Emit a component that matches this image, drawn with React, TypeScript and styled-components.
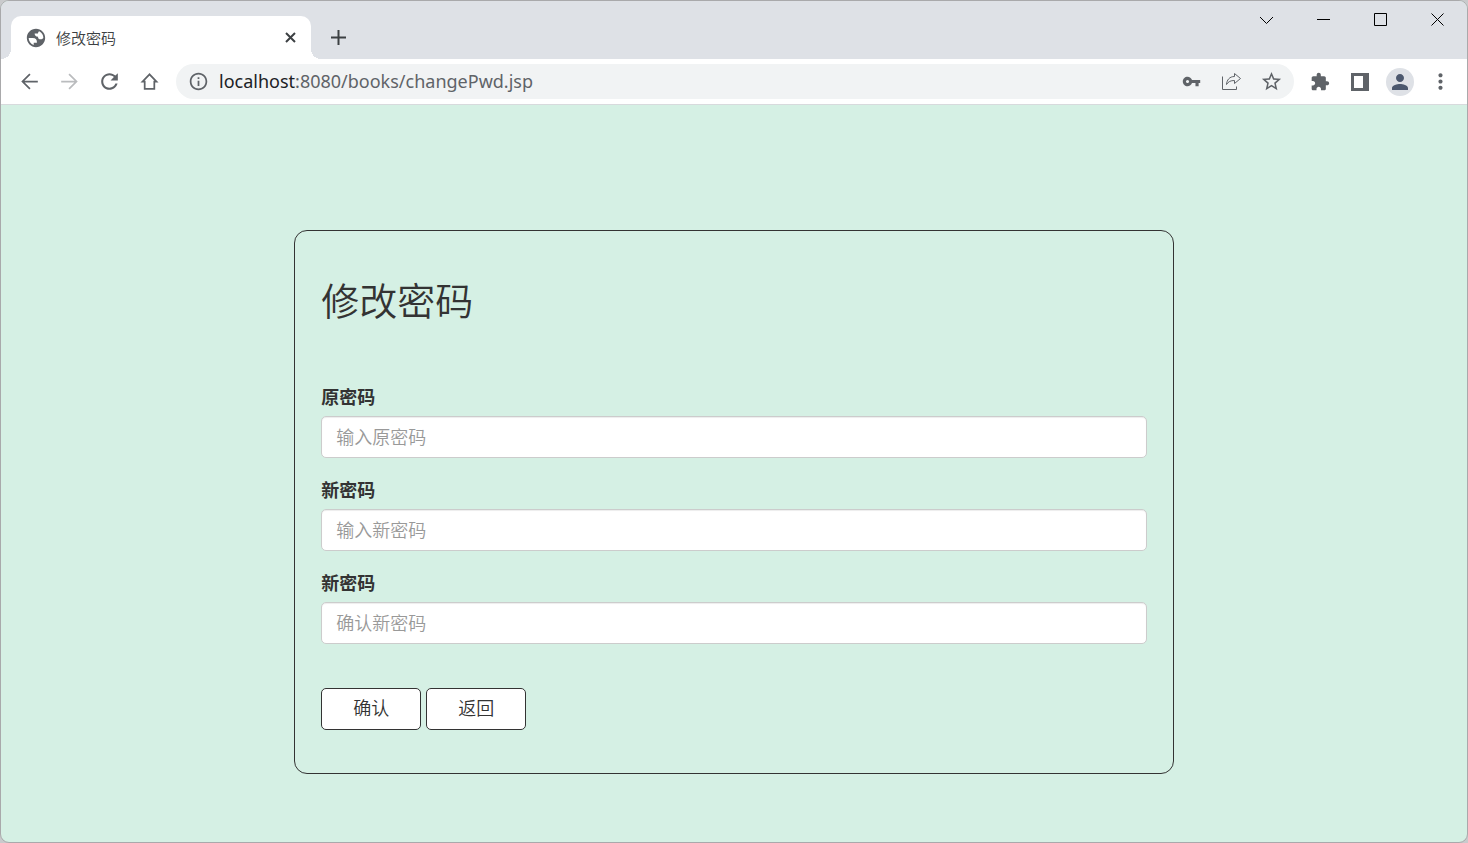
import React from "react";
import styled, { createGlobalStyle } from "styled-components";

const cjk = `"Noto Sans CJK SC", sans-serif`;

const GlobalStyle = createGlobalStyle`
  *, *::before, *::after { box-sizing: border-box; }
  body { margin: 0; background: #c9cacc; font-family: ${cjk}; }
  button, input { font-family: inherit; }
`;

const BrowserWindow = styled.div`
  display: flex;
  flex-direction: column;
  min-height: 100vh;
  border: 1px solid #a9a9ab;
  border-radius: 9px;
  overflow: hidden;
  background: #d5f0e4;
`;

const TitleBar = styled.header`
  display: flex;
  align-items: flex-start;
  height: 58px;
  padding-left: 10px;
  background: #dee1e6;
`;

const Tab = styled.div`
  position: relative;
  display: flex;
  align-items: center;
  width: 300px;
  height: 43px;
  margin-top: 15px;
  padding: 0 11px 0 14px;
  border-radius: 10px 10px 0 0;
  background: #fff;
  color: #5f6368;

  &::before, &::after {
    content: "";
    position: absolute;
    bottom: 0;
    width: 10px;
    height: 10px;
  }
  &::before {
    right: 100%;
    background: radial-gradient(circle at 0 0, transparent 10px, #fff 10px);
  }
  &::after {
    left: 100%;
    background: radial-gradient(circle at 100% 0, transparent 10px, #fff 10px);
  }
`;

const TabTitle = styled.span`
  flex: 1;
  margin-left: 9px;
  font-size: 15px;
  line-height: 20px;
  font-weight: 350;
  color: #3c4043;
`;

const IconButton = styled.button<{ $width?: number; $height?: number; $color?: string }>`
  display: flex;
  flex: none;
  align-items: center;
  justify-content: center;
  width: ${(p) => p.$width ?? 40}px;
  height: ${(p) => p.$height ?? 35}px;
  padding: 0;
  border: 0;
  background: none;
  color: ${(p) => p.$color ?? "#5f6368"};
`;

const NewTab = styled(IconButton)`
  margin: 19px 0 0 12px;
`;

const WindowControls = styled.div`
  display: flex;
  margin-left: auto;
  padding-right: 1px;
`;

const Toolbar = styled.nav`
  display: flex;
  align-items: center;
  height: 46px;
  padding: 0 7px 0 8px;
  border-bottom: 1px solid #d8dadd;
  background: #fff;
`;

const AddressBar = styled.div`
  display: flex;
  flex: 1;
  align-items: center;
  height: 35px;
  margin: 0 6px 0 7px;
  padding: 0 3px 0 12px;
  border-radius: 18px;
  background: #f1f3f4;
  color: #5f6368;
`;

const Url = styled.span`
  flex: 1;
  margin-left: 10px;
  padding-bottom: 2px;
  font-family: "Noto Sans", sans-serif;
  font-size: 18px;
  line-height: 24px;
`;

const Host = styled.span`
  color: #202124;
`;

const Avatar = styled.span`
  display: flex;
  align-items: center;
  justify-content: center;
  width: 28px;
  height: 28px;
  border-radius: 50%;
  background: #dee1e6;
  color: #4c586e;
`;

const Page = styled.main`
  flex: 1;
  padding: 125px 0 68px;
`;

const Card = styled.form`
  width: 60%;
  margin: 0 auto;
  padding: 48px 26px 43px;
  border: 1px solid #333;
  border-radius: 13px;
  color: #333;
`;

const Heading = styled.h1`
  margin: 0 0 65px;
  font-size: 38px;
  line-height: 40px;
  font-weight: 350;
`;

const Field = styled.div`
  margin-bottom: 19px;
`;

const Label = styled.label`
  display: block;
  margin-bottom: 7px;
  font-size: 18px;
  line-height: 25px;
  font-weight: 700;
`;

const Input = styled.input`
  display: block;
  width: 100%;
  height: 42px;
  padding: 0 14px 2px;
  border: 1px solid #ccc;
  border-radius: 5px;
  background: #fff;
  box-shadow: inset 0 1px 1px rgba(0, 0, 0, 0.075);
  font-size: 18px;
  font-weight: 350;
  color: #555;

  &::placeholder { color: #999; opacity: 1; }
`;

const Actions = styled.div`
  display: flex;
  gap: 5px;
  margin-top: 44px;
`;

const Button = styled.button`
  width: 100px;
  height: 42px;
  padding: 0 0 4px;
  border: 1px solid #333;
  border-radius: 5px;
  background: #fff;
  font-size: 18px;
  line-height: 25px;
  font-weight: 350;
  color: #333;
`;

type IconProps = { d: string; size?: number; stroke?: number; box?: number };

const Icon = ({ d, size = 21, stroke, box = 24 }: IconProps) => (
  <svg
    width={size}
    height={size}
    viewBox={`0 0 ${box} ${box}`}
    fill={stroke ? "none" : "currentColor"}
    stroke={stroke ? "currentColor" : "none"}
    strokeWidth={stroke}
    aria-hidden="true"
  >
    <path d={d} />
  </svg>
);

const paths = {
  globe:
    "M12 2C6.48 2 2 6.48 2 12s4.48 10 10 10 10-4.48 10-10S17.52 2 12 2zM4 12h4.4c3.4 0 4.9 1.7 4.6 5.1H9.5v2.5C6.3 18.5 4 15.5 4 12zm16 0c-.8 1-1.7 1.4-2.9 1.4-1.9 0-2.9-1-2.900-2.900-2.500 0-3.700-1.300-3.700-3.400h3.700c0-1.500.7-2.200 1.300-2.500C18.300 5.900 20 8.700 20 12z",
  back: "M21.5 12H4.5M12.5 3.5L4 12l8.500 8.500",
  forward: "M2.500 12h17M11.500 3.500L20 12l-8.500 8.500",
  reload:
    "M17.650 6.350C16.200 4.900 14.210 4 12 4c-4.420 0-7.990 3.580-7.990 8s3.570 8 7.990 8c3.730 0 6.840-2.550 7.730-6h-2.080c-.82 2.330-3.040 4-5.650 4-3.310 0-6-2.690-6-6s2.690-6 6-6c1.660 0 3.140.69 4.220 1.780L13 11h7V4l-2.350 2.350z",
  home: "M12 3.800L4 12.200h2.500V20.500h11V12.200H20z",
  info: "M11 7h2v2h-2zm0 4h2v6h-2zm1-9C6.480 2 2 6.480 2 12s4.480 10 10 10 10-4.480 10-10S17.520 2 12 2zm0 18c-4.410 0-8-3.590-8-8s3.590-8 8-8 8 3.590 8 8-3.590 8-8 8z",
  key: "M12.650 10C11.830 7.670 9.610 6 7 6c-3.310 0-6 2.690-6 6s2.690 6 6 6c2.610 0 4.830-1.670 5.650-4H17v4h4v-4h2v-4H12.650zM7 14c-1.100 0-2-.9-2-2s.9-2 2-2 2 .9 2 2-.9 2-2 2z",
  share: "M1.500 5.500v13h14v-3M13.500 2.500l6 5-6 5v-3c-4 0-6 1-8 4 .3-4.500 3-8 8-8z",
  star: "M22 9.240l-7.190-.62L12 2 9.190 8.630 2 9.240l5.460 4.730L5.820 21 12 17.270 18.180 21l-1.630-7.030L22 9.240zM12 15.400l-3.760 2.270 1-4.280-3.320-2.880 4.380-.38L12 6.100l1.710 4.040 4.380.38-3.320 2.880 1 4.280L12 15.400z",
  puzzle:
    "M20.500 11H19V7c0-1.100-.9-2-2-2h-4V3.500C13 2.120 11.880 1 10.500 1S8 2.120 8 3.500V5H4c-1.100 0-1.990.9-1.990 2v3.800H3.500c1.490 0 2.700 1.210 2.700 2.700s-1.210 2.700-2.700 2.700H2V20c0 1.100.9 2 2 2h3.800v-1.500c0-1.490 1.210-2.700 2.700-2.700 1.490 0 2.700 1.210 2.700 2.700V22H17c1.100 0 2-.9 2-2v-4h1.500c1.380 0 2.500-1.120 2.500-2.500S21.880 11 20.500 11z",
  panel: "M0 0h18v18H0zM3 3v12h9V3z",
  person:
    "M12 12c2.210 0 4-1.790 4-4s-1.790-4-4-4-4 1.790-4 4 1.790 4 4 4zm0 2c-2.670 0-8 1.340-8 4v2h16v-2c0-2.660-5.330-4-8-4z",
  more: "M12 8c1.100 0 2-.9 2-2s-.9-2-2-2-2 .9-2 2 .9 2 2 2zm0 2c-1.100 0-2 .9-2 2s.9 2 2 2 2-.9 2-2-.9-2-2-2zm0 6c-1.100 0-2 .9-2 2s.9 2 2 2 2-.9 2-2-.9-2-2-2z",
};

const fields = [
  { id: "oldPwd", label: "原密码", hint: "输入原密码" },
  { id: "newPwd", label: "新密码", hint: "输入新密码" },
  { id: "confirmPwd", label: "新密码", hint: "确认新密码" },
];

const controls = [
  { label: "Search tabs", d: "M0 4l6.500 6.500L13 4" },
  { label: "Minimize", d: "M0 6.500h13" },
  { label: "Maximize", d: "M.5.5h12v12H.5z" },
  { label: "Close window", d: "M.5.5l12 12M12.500.5l-12 12" },
];

export default function App() {
  return (
    <>
      <GlobalStyle />
      <BrowserWindow>
        <TitleBar>
          <Tab>
            <Icon d={paths.globe} size={22} />
            <TabTitle>修改密码</TabTitle>
            <IconButton $width={20} $height={20} $color="#3c4043" aria-label="Close tab">
              <Icon d="M1 1l9 9M10 1l-9 9" size={11} box={11} stroke={2} />
            </IconButton>
          </Tab>
          <NewTab $width={30} $color="#3c4043" aria-label="New tab">
            <Icon d="M7.500 0v15M0 7.500h15" size={15} box={15} stroke={2} />
          </NewTab>
          <WindowControls>
            {controls.map((c) => (
              <IconButton key={c.label} $width={57} $height={37} $color="#000" aria-label={c.label}>
                <Icon d={c.d} size={13} box={13} stroke={1} />
              </IconButton>
            ))}
          </WindowControls>
        </TitleBar>
        <Toolbar>
          <IconButton aria-label="Back"><Icon d={paths.back} stroke={2} /></IconButton>
          <IconButton aria-label="Forward" $color="#babcbe"><Icon d={paths.forward} stroke={2} /></IconButton>
          <IconButton aria-label="Reload"><Icon d={paths.reload} size={25} /></IconButton>
          <IconButton aria-label="Home"><Icon d={paths.home} stroke={2} /></IconButton>
          <AddressBar>
            <Icon d={paths.info} />
            <Url><Host>localhost</Host>:8080/books/changePwd.jsp</Url>
            <IconButton aria-label="Saved passwords"><Icon d={paths.key} size={19} /></IconButton>
            <IconButton aria-label="Share"><Icon d={paths.share} size={21} box={21} stroke={1} /></IconButton>
            <IconButton aria-label="Bookmark"><Icon d={paths.star} size={23} /></IconButton>
          </AddressBar>
          <IconButton aria-label="Extensions"><Icon d={paths.puzzle} size={20} /></IconButton>
          <IconButton aria-label="Side panel">
            <svg width="18" height="18" viewBox="0 0 18 18" aria-hidden="true">
              <path d={paths.panel} fill="currentColor" fillRule="evenodd" />
            </svg>
          </IconButton>
          <IconButton aria-label="Profile"><Avatar><Icon d={paths.person} size={24} /></Avatar></IconButton>
          <IconButton aria-label="Menu"><Icon d={paths.more} size={25} /></IconButton>
        </Toolbar>
        <Page>
          <Card onSubmit={(e) => e.preventDefault()}>
            <Heading>修改密码</Heading>
            {fields.map((f) => (
              <Field key={f.id}>
                <Label htmlFor={f.id}>{f.label}</Label>
                <Input id={f.id} type="password" placeholder={f.hint} />
              </Field>
            ))}
            <Actions>
              <Button type="submit">确认</Button>
              <Button type="button">返回</Button>
            </Actions>
          </Card>
        </Page>
      </BrowserWindow>
    </>
  );
}
